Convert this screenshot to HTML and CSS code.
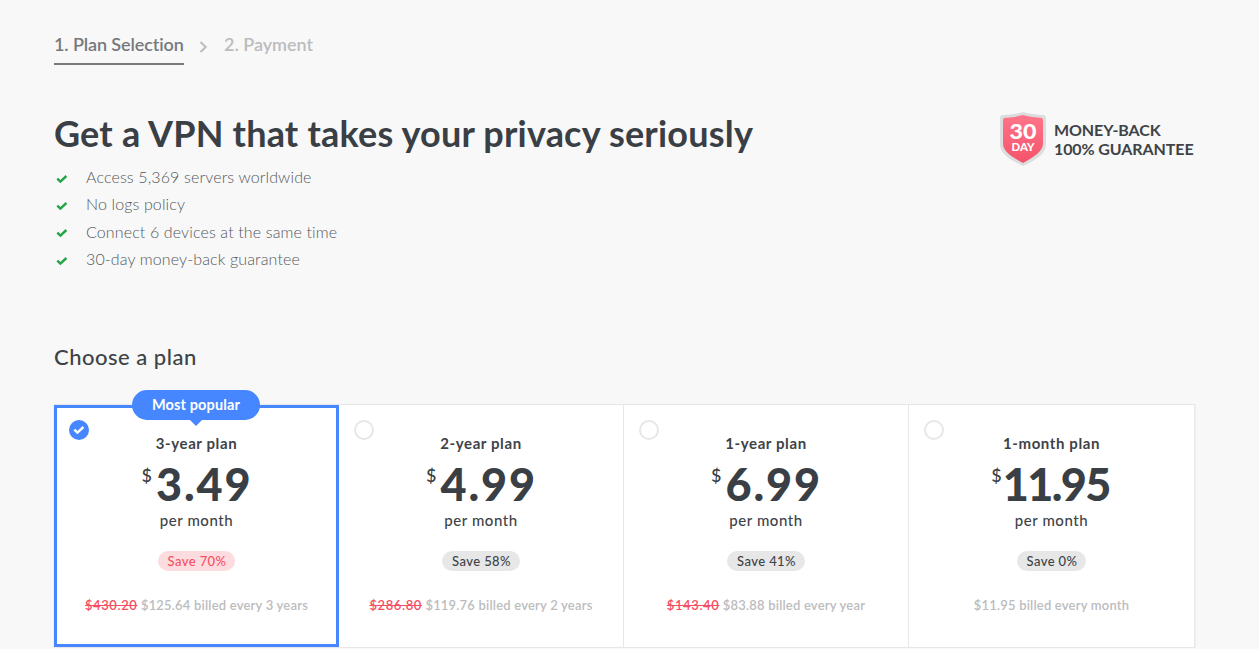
FILE: index.html
```html
<!DOCTYPE html>
<html lang="en">
<head>
    <meta charset="UTF-8">
    <meta name="viewport" content="width=device-width, initial-scale=1.0">
    <title>Plan Selection</title>
    <link rel="stylesheet" href="styles.css">
</head>
<body>
    <svg width="0" height="0" class="sprite">
        <symbol id="check" viewBox="0 0 12 10">
            <path d="M1.3 4.6l3.1 3L10.4 2" fill="none" stroke="currentColor" stroke-width="2.4"/>
        </symbol>
    </svg>

    <div class="container">
        <nav class="steps">
            <span class="step active">1. Plan Selection</span>
            <svg class="chevron" width="9" height="12" viewBox="0 0 9 12"><path d="M1.5 1L6.7 6L1.5 11" fill="none" stroke="#bbbcbe" stroke-width="2"/></svg>
            <span class="step">2. Payment</span>
        </nav>

        <header class="hero">
            <div>
                <h1>Get a VPN that takes your privacy seriously</h1>
                <ul class="features">
                    <li><svg><use href="#check"/></svg>Access 5,369 servers worldwide</li>
                    <li><svg><use href="#check"/></svg>No logs policy</li>
                    <li><svg><use href="#check"/></svg>Connect 6 devices at the same time</li>
                    <li><svg><use href="#check"/></svg>30-day money-back guarantee</li>
                </ul>
            </div>
            <div class="guarantee">
                <svg width="46" height="54" viewBox="0 0 46 54">
                    <defs>
                        <linearGradient id="shield" x1="0" y1="0" x2="0" y2="1">
                            <stop offset="0" stop-color="#ff758a"/>
                            <stop offset="1" stop-color="#f4536a"/>
                        </linearGradient>
                    </defs>
                    <path d="M23 0C30 2 37 2.6 43 3Q46 3.3 46 6V32C46 42 36 48 23 54C10 48 0 42 0 32V6Q0 3.3 3 3C9 2.6 16 2 23 0Z" fill="#dcdddf"/>
                    <path d="M23 3C30 4.8 36 5.5 41 5.8Q43 6 43 8V31.5C43 39.5 34 45 23 51C12 45 3 39.5 3 31.5V8Q3 6 5 5.8C10 5.5 16 4.8 23 3Z" fill="url(#shield)"/>
                    <text x="23" y="26.5" text-anchor="middle" class="shield-num" textLength="27" lengthAdjust="spacingAndGlyphs">30</text>
                    <text x="23" y="39" text-anchor="middle" class="shield-day" textLength="23" lengthAdjust="spacingAndGlyphs">DAY</text>
                </svg>
                <p>MONEY-BACK<br>100% GUARANTEE</p>
            </div>
        </header>

        <h2>Choose a plan</h2>

        <div class="plans">
            <div class="plan selected">
                <span class="popular">Most popular</span>
                <span class="radio"><svg><use href="#check"/></svg></span>
                <h3>3-year plan</h3>
                <div class="price"><sup>$</sup><span>3.49</span></div>
                <div class="period">per month</div>
                <span class="save">Save 70%</span>
                <p class="billed"><del>$430.20</del> $125.64 billed every 3 years</p>
            </div>
            <div class="plan">
                <span class="radio"></span>
                <h3>2-year plan</h3>
                <div class="price"><sup>$</sup><span>4.99</span></div>
                <div class="period">per month</div>
                <span class="save">Save 58%</span>
                <p class="billed"><del>$286.80</del> $119.76 billed every 2 years</p>
            </div>
            <div class="plan">
                <span class="radio"></span>
                <h3>1-year plan</h3>
                <div class="price"><sup>$</sup><span>6.99</span></div>
                <div class="period">per month</div>
                <span class="save">Save 41%</span>
                <p class="billed"><del>$143.40</del> $83.88 billed every year</p>
            </div>
            <div class="plan">
                <span class="radio"></span>
                <h3>1-month plan</h3>
                <div class="price narrow"><sup>$</sup><span>11.95</span></div>
                <div class="period">per month</div>
                <span class="save">Save 0%</span>
                <p class="billed">$11.95 billed every month</p>
            </div>
        </div>
    </div>
</body>
</html>
```
FILE: styles.css
```css
* {
    box-sizing: border-box;
}

body {
    margin: 0;
    background-color: #f8f8f8;
    color: #3e4347;
    font-family: Lato, "Open Sans", sans-serif;
    font-size: 16px;
    font-variant-ligatures: none;
}

h1, h2, h3, p, ul {
    margin: 0;
    padding: 0;
}

.sprite {
    position: absolute;
}

.container {
    width: 1141px;
    margin-left: 54px;
    padding-top: 35px;
}

/* Steps */
.steps {
    display: flex;
    align-items: flex-start;
    height: 74px;
}

.step {
    height: 30px;
    line-height: 18px;
    font-size: 18px;
    font-weight: 600;
    color: #bbbcbe;
    white-space: nowrap;
}

.step.active {
    width: 130px;
    color: #77797d;
    border-bottom: 2px solid #77797d;
    letter-spacing: -0.1px;
}

.chevron {
    margin: 6px 16px 0 15px;
}

/* Hero */
.hero {
    display: flex;
    justify-content: space-between;
    height: 233px;
}

h1 {
    font-size: 36px;
    font-weight: 700;
    line-height: 48px;
    letter-spacing: 0.2px;
    color: #3a3f45;
    white-space: nowrap;
}

.features {
    list-style: none;
    padding-top: 6px;
}

.features li {
    display: flex;
    align-items: center;
    height: 27.3px;
    font-weight: 300;
    color: #55585c;
    letter-spacing: 0.13px;
}

.features svg {
    width: 12px;
    height: 10px;
    margin: 4px 18px 0 2px;
    color: #22a447;
}

.guarantee {
    display: flex;
    width: 195px;
    padding-top: 3px;
}

.guarantee p {
    margin: 8px 0 0 8px;
    font-weight: 700;
    line-height: 19px;
    letter-spacing: -0.1px;
    white-space: nowrap;
}

.guarantee svg {
    flex-shrink: 0;
}

.shield-num, .shield-day {
    fill: #fff;
    font-weight: 900;
    font-size: 20px;
}

.shield-day {
    font-size: 11px;
}

h2 {
    font-size: 22px;
    font-weight: 500;
    line-height: 30px;
    letter-spacing: 0.5px;
}

/* Plans */
.plans {
    display: grid;
    grid-template-columns: repeat(4, 285px);
    width: 1141px;
    height: 244px;
    margin-top: 32px;
    background-color: #fff;
    border: 1px solid #e7e7e7;
    border-left: 0;
    box-shadow: 0 1px 2px rgba(0, 0, 0, 0.1);
}

.plan {
    position: relative;
    display: flex;
    flex-direction: column;
    align-items: center;
    padding-top: 28px;
    border-right: 1px solid #e7e7e7;
}

.plan:last-child {
    border-right: 0;
}

.plan.selected {
    padding-top: 25px;
    border: 3px solid #4687ff;
}

.radio {
    position: absolute;
    top: 15px;
    left: 15px;
    width: 20px;
    height: 20px;
    border: 2px solid #e7e7e7;
    border-radius: 50%;
}

.selected .radio {
    display: flex;
    align-items: center;
    justify-content: center;
    top: 12px;
    left: 12px;
    background-color: #4687ff;
    border: 0;
    color: #fff;
}

.radio svg {
    width: 12px;
    height: 10px;
}

.popular {
    position: absolute;
    top: -18px;
    left: 75px;
    width: 128px;
    height: 30px;
    border-radius: 15px;
    background-color: #4687ff;
    color: #fff;
    font-size: 14.5px;
    font-weight: 700;
    line-height: 30px;
    letter-spacing: 0.15px;
    text-align: center;
}

.popular::after {
    content: "";
    position: absolute;
    top: 30px;
    left: 58px;
    border: 6px solid transparent;
    border-top-color: #4687ff;
    border-bottom: 0;
}

h3 {
    font-size: 15px;
    font-weight: 700;
    line-height: 20px;
    letter-spacing: 0.6px;
}

.price {
    display: flex;
    height: 57px;
    color: #3a3f45;
}

.price sup {
    margin: 11px 4px 0 0;
    font-size: 18px;
    font-weight: 500;
    line-height: 22px;
}

.price span {
    margin-right: -1px;
    font-size: 45px;
    font-weight: 900;
    line-height: 62px;
    letter-spacing: 1.9px;
}

.price.narrow span {
    margin: 0 2px 0 -3px;
    letter-spacing: -1.6px;
}

.period {
    font-size: 15px;
    font-weight: 500;
    line-height: 20px;
    letter-spacing: 0.55px;
}

.save {
    height: 20px;
    margin-top: 21px;
    padding: 0 9px 0 10px;
    border-radius: 10px;
    background-color: #e7e7e7;
    font-size: 13px;
    font-weight: 500;
    line-height: 20px;
    letter-spacing: 0.4px;
}

.selected .save {
    background-color: #fddcdf;
    color: #f64f64;
}

.billed {
    margin-top: 24px;
    font-size: 13px;
    font-weight: 600;
    line-height: 20px;
    letter-spacing: 0.2px;
    color: #bbbcbe;
    white-space: nowrap;
}

.billed del {
    color: #f64f64;
    letter-spacing: 0.6px;
}
```
